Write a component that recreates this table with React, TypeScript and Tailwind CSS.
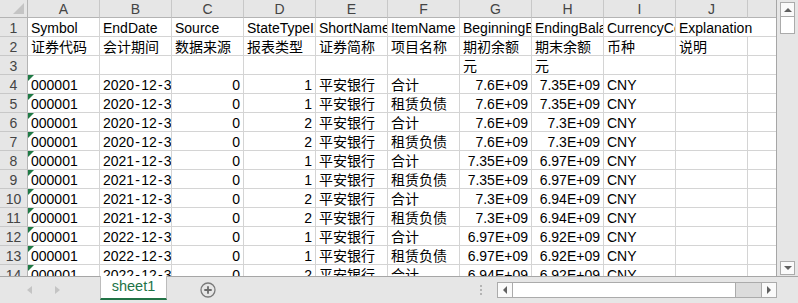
import React from "react";

const FONT = "font-['Liberation_Sans','Noto_Sans_CJK_SC',sans-serif]";

const letters = ["A", "B", "C", "D", "E", "F", "G", "H", "I", "J"];

type Row = { cells: string[]; data?: boolean };

const head1 = ["Symbol", "EndDate", "Source", "StateTypeID", "ShortName", "ItemName", "BeginningBalance", "EndingBalance", "CurrencyCode", "Explanation"];
const head2 = ["证券代码", "会计期间", "数据来源", "报表类型", "证券简称", "项目名称", "期初余额", "期末余额", "币种", "说明"];
const head3 = ["", "", "", "", "", "", "元", "元", "", ""];

const dataRows: string[][] = [
  ["000001", "2020-12-31", "0", "1", "平安银行", "合计", "7.6E+09", "7.35E+09", "CNY", ""],
  ["000001", "2020-12-31", "0", "1", "平安银行", "租赁负债", "7.6E+09", "7.35E+09", "CNY", ""],
  ["000001", "2020-12-31", "0", "2", "平安银行", "合计", "7.6E+09", "7.3E+09", "CNY", ""],
  ["000001", "2020-12-31", "0", "2", "平安银行", "租赁负债", "7.6E+09", "7.3E+09", "CNY", ""],
  ["000001", "2021-12-31", "0", "1", "平安银行", "合计", "7.35E+09", "6.97E+09", "CNY", ""],
  ["000001", "2021-12-31", "0", "1", "平安银行", "租赁负债", "7.35E+09", "6.97E+09", "CNY", ""],
  ["000001", "2021-12-31", "0", "2", "平安银行", "合计", "7.3E+09", "6.94E+09", "CNY", ""],
  ["000001", "2021-12-31", "0", "2", "平安银行", "租赁负债", "7.3E+09", "6.94E+09", "CNY", ""],
  ["000001", "2022-12-31", "0", "1", "平安银行", "合计", "6.97E+09", "6.92E+09", "CNY", ""],
  ["000001", "2022-12-31", "0", "1", "平安银行", "租赁负债", "6.97E+09", "6.92E+09", "CNY", ""],
  ["000001", "2022-12-31", "0", "2", "平安银行", "合计", "6.94E+09", "6.92E+09", "CNY", ""],
];

const rows: Row[] = [
  { cells: head1 },
  { cells: head2 },
  { cells: head3 },
  ...dataRows.map((c) => ({ cells: c, data: true })),
];

const numericCols = new Set([2, 3, 6, 7]);

function DateText({ text }: { text: string }) {
  const parts = text.split("-");
  return (
    <>
      {parts.map((p, i) => (
        <React.Fragment key={i}>
          {i > 0 && <span className="mx-[1.2px]">-</span>}
          {p}
        </React.Fragment>
      ))}
    </>
  );
}

function ColumnHeader() {
  return (
    <div className="flex h-[18px] shrink-0">
      <div className="relative w-[28px] h-[18px] shrink-0 bg-[#e6e6e6] border-r border-b border-[#b4b4b4]">
        <div className="absolute right-[3px] bottom-[3px] w-0 h-0 border-l-[11px] border-l-transparent border-b-[11px] border-b-[#c4c4c4]" />
      </div>
      {letters.map((l) => (
        <div
          key={l}
          className="w-[72px] h-[18px] shrink-0 bg-[#e6e6e6] border-r border-b border-r-[#c8c8c8] border-b-[#b4b4b4] text-center text-[#444] text-[14px] leading-[18px]"
        >
          {l}
        </div>
      ))}
      <div className="w-[28px] h-[18px] shrink-0 bg-[#e6e6e6] border-b border-[#b4b4b4]" />
    </div>
  );
}

function GridRow({ row, index }: { row: Row; index: number }) {
  return (
    <div className="flex h-[19px] shrink-0">
      <div className="w-[28px] h-[19px] shrink-0 bg-[#e6e6e6] border-r border-b border-r-[#b4b4b4] border-b-[#c8c8c8] text-center text-[#444] text-[14px] leading-[18px] pt-[1px]">
        {index}
      </div>
      {row.cells.map((c, ci) => {
        const right = row.data && numericCols.has(ci);
        const overflow = index === 1 && ci === 9;
        const isDate = row.data && ci === 1;
        return (
          <div
            key={ci}
            className={`relative w-[72px] h-[19px] shrink-0 bg-white border-b border-[#d4d4d4] whitespace-nowrap px-[3px] pt-[1px] text-[14px] leading-[18px] text-black ${
              overflow ? "z-10 overflow-visible border-r-0 pr-0" : "overflow-hidden border-r"
            } ${right ? "text-right" : "text-left"}`}
          >
            {row.data && ci === 0 && (
              <div className="absolute left-0 top-0 w-0 h-0 border-t-[6px] border-t-[#1f7a45] border-r-[6px] border-r-transparent" />
            )}
            {isDate ? <DateText text={c} /> : c}
          </div>
        );
      })}
      <div className="w-[28px] h-[19px] shrink-0 bg-white border-b border-[#d4d4d4]" />
    </div>
  );
}

function VScroll() {
  return (
    <div className="w-[21px] h-full shrink-0 bg-[#e6e6e6] flex flex-col pl-[3px] pt-[2px] pb-[1px]">
      <div className="w-[15px] h-[15px] bg-[#fafafa] border border-[#ababab] flex items-center justify-center">
        <div className="w-0 h-0 border-l-[4px] border-r-[4px] border-b-[4px] border-l-transparent border-r-transparent border-b-[#606060]" />
      </div>
      <div className="w-[15px] h-[17px] bg-white border border-[#ababab] border-t-0" />
      <div className="flex-1" />
      <div className="w-[15px] h-[14px] bg-[#fafafa] border border-[#ababab] flex items-center justify-center">
        <div className="w-0 h-0 border-l-[4px] border-r-[4px] border-t-[4px] border-l-transparent border-r-transparent border-t-[#606060]" />
      </div>
    </div>
  );
}

function TabBar() {
  return (
    <div className="h-[27px] shrink-0 bg-[#e6e6e6] border-t border-[#a6a6a6] flex items-start relative">
      <div className="w-[100px] h-full flex items-center pl-[27px] gap-[23px] shrink-0">
        <div className="w-0 h-0 border-t-[4px] border-b-[4px] border-r-[5px] border-t-transparent border-b-transparent border-r-[#c4c4c4]" />
        <div className="w-0 h-0 border-t-[4px] border-b-[4px] border-l-[5px] border-t-transparent border-b-transparent border-l-[#c4c4c4]" />
      </div>
      <div className="w-[67px] h-[24px] shrink-0 bg-white border-l border-r border-[#bcbcbc] border-b-2 border-b-[#217346] mt-[-1px] flex items-center justify-center text-[14.5px] text-[#217346] leading-none pb-[1px]">
        sheet1
      </div>
      <div className="h-full shrink-0 flex items-center ml-[33px]">
        <svg width="16" height="16" viewBox="0 0 16 16">
          <circle cx="8" cy="8" r="7" fill="none" stroke="#7a7a7a" strokeWidth="1.3" />
          <path d="M8 4.3v7.4M4.3 8h7.4" stroke="#6a6a6a" strokeWidth="1.8" />
        </svg>
      </div>
      <div className="flex-1 h-full flex items-center justify-end pr-[15px]">
        <div className="flex flex-col gap-[2px]">
          <div className="w-[2px] h-[2px] bg-[#b4b4b4]" />
          <div className="w-[2px] h-[2px] bg-[#b4b4b4]" />
          <div className="w-[2px] h-[2px] bg-[#b4b4b4]" />
        </div>
      </div>
      <div className="w-[280px] h-[16px] mt-[5px] mr-[21px] shrink-0 border border-[#ababab] bg-[#dcdcdc] flex">
        <div className="w-[15px] h-full bg-[#fafafa] border-r border-[#ababab] flex items-center justify-center">
          <div className="w-0 h-0 border-t-[4px] border-b-[4px] border-r-[4px] border-t-transparent border-b-transparent border-r-[#606060]" />
        </div>
        <div className="w-[223px] h-full bg-white border-r border-[#ababab]" />
        <div className="flex-1" />
        <div className="w-[15px] h-full bg-[#fafafa] border-l border-[#ababab] flex items-center justify-center">
          <div className="w-0 h-0 border-t-[4px] border-b-[4px] border-l-[4px] border-t-transparent border-b-transparent border-l-[#606060]" />
        </div>
      </div>
    </div>
  );
}

export default function App() {
  return (
    <div className={`w-[798px] h-[303px] overflow-hidden bg-[#e6e6e6] flex flex-col ${FONT}`}>
      <div className="flex h-[276px] shrink-0">
        <div className="w-[777px] h-full shrink-0 overflow-hidden flex flex-col border-r border-[#a6a6a6] bg-white">
          <ColumnHeader />
          {rows.map((r, i) => (
            <GridRow key={i} row={r} index={i + 1} />
          ))}
        </div>
        <VScroll />
      </div>
      <TabBar />
    </div>
  );
}
